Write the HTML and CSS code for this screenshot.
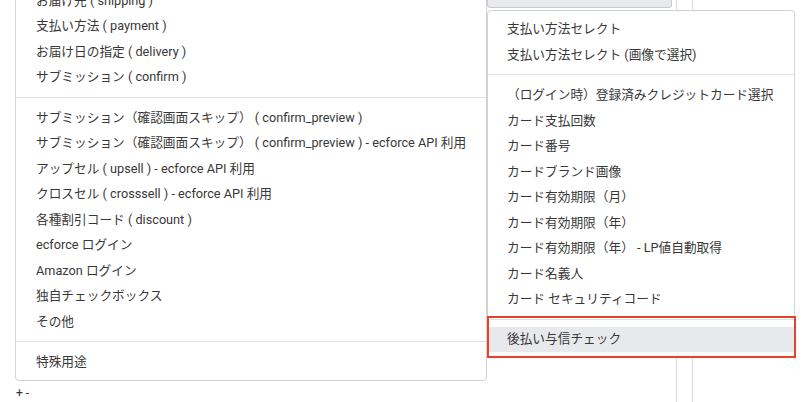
FILE: index.html
```html
<!DOCTYPE html>
<html lang="ja">
<head>
<meta charset="utf-8">
<link rel="stylesheet" href="styles.css">
</head>
<body>
<div class="page">
  <div class="backdrop">
    <div class="bd-spacer"></div>
    <div class="bd-input"></div>
    <div class="bd-line"></div>
    <div class="bd-line"></div>
  </div>

  <div class="stack">
    <ul class="menu menu-main">
      <li class="item">お届け先 ( shipping )</li>
      <li class="item">支払い方法 ( payment )</li>
      <li class="item">お届け日の指定 ( delivery )</li>
      <li class="item">サブミッション ( confirm )</li>
      <li class="sep"></li>
      <li class="item">サブミッション（確認画面スキップ） ( confirm_preview )</li>
      <li class="item">サブミッション（確認画面スキップ） ( confirm_preview ) - ecforce API 利用</li>
      <li class="item">アップセル ( upsell ) - ecforce API 利用</li>
      <li class="item">クロスセル ( crosssell ) - ecforce API 利用</li>
      <li class="item">各種割引コード ( discount )</li>
      <li class="item">ecforce ログイン</li>
      <li class="item">Amazon ログイン</li>
      <li class="item">独自チェックボックス</li>
      <li class="item">その他</li>
      <li class="sep"></li>
      <li class="item">特殊用途</li>
    </ul>
    <div class="addremove">+ -</div>
  </div>

  <ul class="menu menu-sub">
    <li class="item">支払い方法セレクト</li>
    <li class="item">支払い方法セレクト (画像で選択)</li>
    <li class="sep"></li>
    <li class="item">（ログイン時）登録済みクレジットカード選択</li>
    <li class="item">カード支払回数</li>
    <li class="item">カード番号</li>
    <li class="item">カードブランド画像</li>
    <li class="item">カード有効期限（月）</li>
    <li class="item">カード有効期限（年）</li>
    <li class="item">カード有効期限（年） - LP値自動取得</li>
    <li class="item">カード名義人</li>
    <li class="item">カード セキュリティコード</li>
    <li class="sep"></li>
    <li class="item active">後払い与信チェック</li>
  </ul>

  <div class="highlight-box"></div>
</div>
</body>
</html>
```

FILE: styles.css
```css
* { box-sizing: border-box; }
html, body {
  margin: 0;
  padding: 0;
  background: #ffffff;
  overflow: hidden;
}
body {
  font-family: "Roboto", "Noto Sans CJK JP", sans-serif;
  color: #383838;
  font-size: 12.7px;
}
.page {
  position: relative;
  width: 809px;
  height: 402px;
  overflow: hidden;
}

/* underlying content */
.backdrop {
  position: absolute;
  inset: 0;
  display: flex;
  align-items: flex-start;
}
.bd-spacer { width: 487px; flex: none; }
.bd-input {
  width: 185px;
  height: 30px;
  margin-top: -22px;
  background: #e7e9ec;
  border: 1px solid #c9cbce;
  border-radius: 3px;
  flex: none;
}
.bd-line {
  width: 1px;
  height: 402px;
  background: #dcdcdc;
  margin-left: 4px;
  flex: none;
}
.bd-line + .bd-line { margin-left: 15px; }

/* main dropdown */
.stack {
  position: relative;
  margin-top: -18.5px;
  padding-left: 15px;
  width: 487px;
}
.menu {
  list-style: none;
  margin: 0;
  padding: 5px 0;
  background: #ffffff;
  border: 1px solid #d3d3d3;
  border-radius: 4px;
}
.item {
  height: 25.5px;
  line-height: 25.5px;
  padding-left: 20px;
  white-space: pre;
}
.sep {
  height: 1px;
  background: #e2e2e2;
  margin: 7px 0;
}
.menu-main { width: 472px; }
.addremove {
  font-size: 12px;
  line-height: 14px;
  margin-top: 5px;
  padding-left: 1px;
  color: #333;
}

/* submenu */
.menu-sub {
  position: absolute;
  left: 487px;
  top: 10px;
  width: 308px;
  padding-bottom: 5px;
  box-shadow: 0 1px 2px rgba(0,0,0,0.04);
}
.menu-sub .item { padding-left: 19px; }
.menu-sub .item.active {
  background: #e7e9ec;
  line-height: 24px;
}

/* annotation */
.highlight-box {
  position: absolute;
  left: 487px;
  top: 316px;
  width: 309px;
  height: 42px;
  border: 2px solid #e5432b;
}
```
